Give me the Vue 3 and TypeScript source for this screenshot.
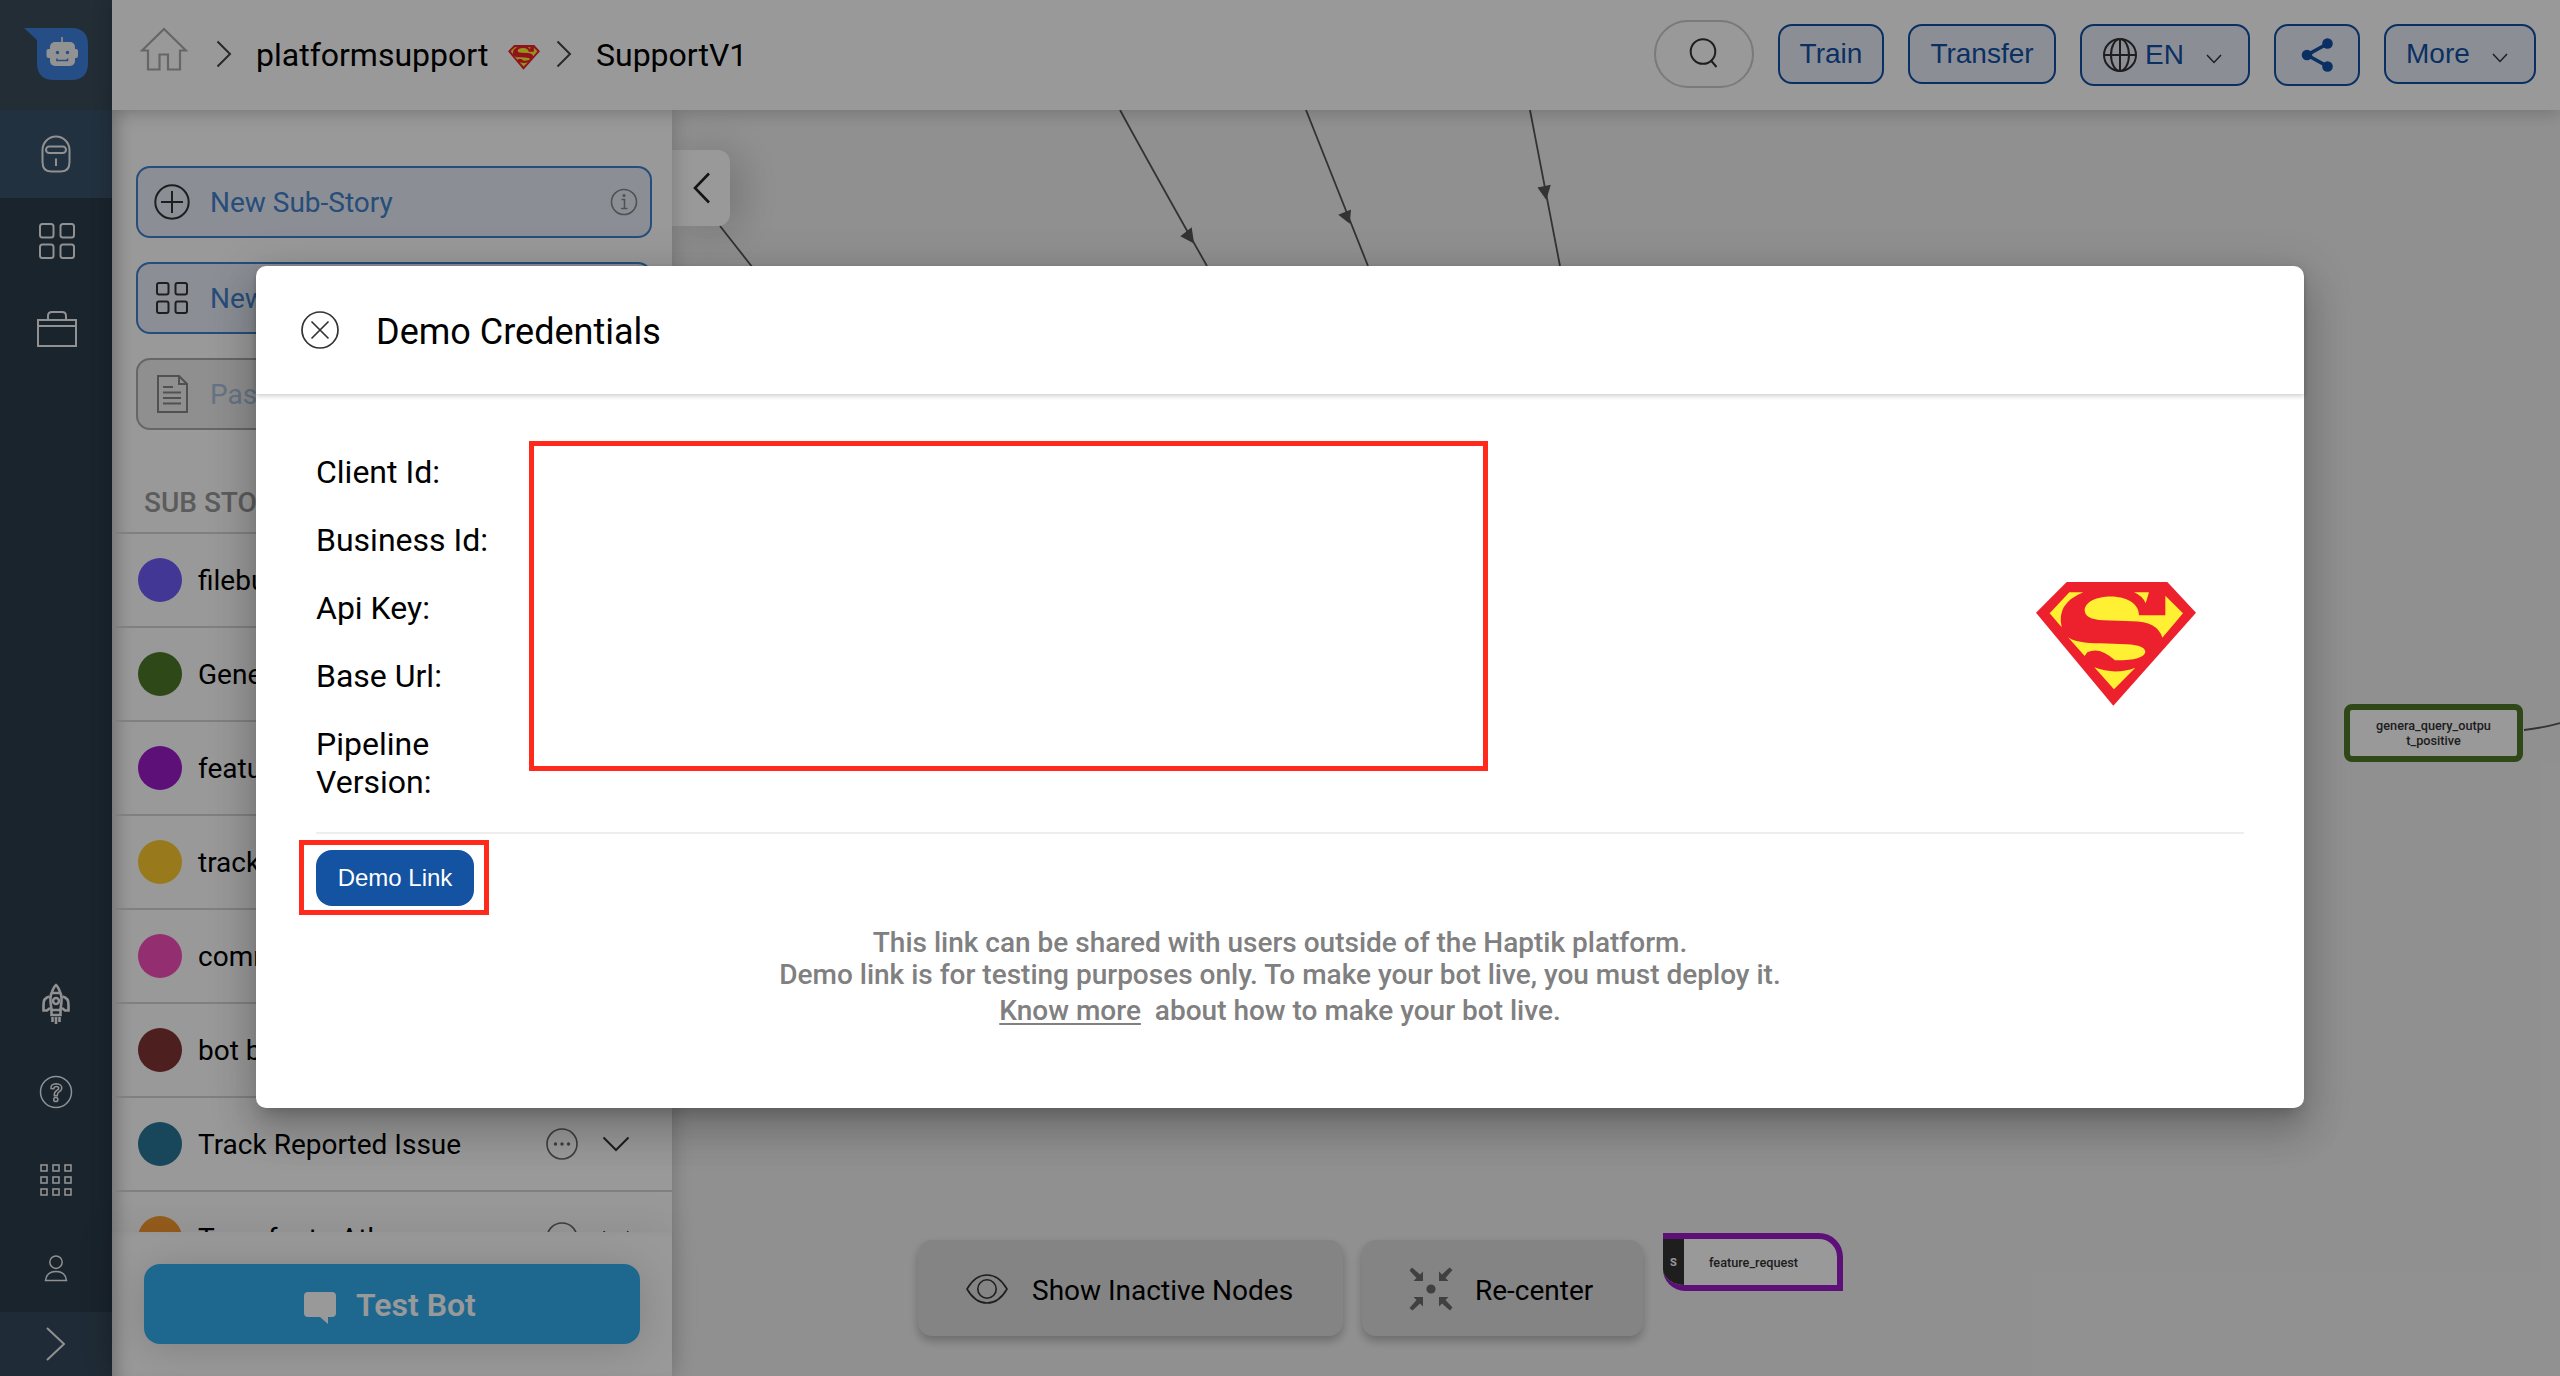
<script setup lang="ts">
interface Story {
  name: string
  color: string
}

const stories: Story[] = [
  { name: 'filebug', color: '#705dfa' },
  { name: 'General', color: '#4e7828' },
  { name: 'feature', color: '#9d1bca' },
  { name: 'tracking', color: '#fdca2d' },
  { name: 'common', color: '#f54dbc' },
  { name: 'bot builder', color: '#823435' },
  { name: 'Track Reported Issue', color: '#287596' },
  { name: 'Transfer to Athena', color: '#fa9b2f' },
]

const labels: string[] = ['Client Id:', 'Business Id:', 'Api Key:', 'Base Url:', 'Pipeline Version:']

const cells: number[] = [0, 12, 24]
</script>

<template>
  <div class="app">
    <nav class="rail">
      <div class="logo">
        <svg width="64" height="52" viewBox="0 0 64 52">
          <path d="M0 0H47Q64 0 64 17V35Q64 52 47 52H30Q13 52 13 35V12Z" fill="#3f82e2" />
          <rect x="37.2" y="9" width="1.6" height="7" fill="#f4f4f4" />
          <rect x="26" y="14" width="25" height="24" rx="5" fill="#f4f4f4" />
          <rect x="22.500" y="21" width="31.500" height="9" rx="2" fill="#f4f4f4" />
          <circle cx="33.500" cy="24.500" r="1.700" fill="#3f82e2" />
          <circle cx="43.500" cy="24.500" r="1.700" fill="#3f82e2" />
          <path d="M33 30.500V32.500H43.500V30.500" fill="none" stroke="#3f82e2" stroke-width="1.600" />
        </svg>
      </div>
      <div class="rail-item active">
        <svg width="30" height="38" viewBox="0 0 30 38" class="line">
          <path d="M1.500 15A13.500 13.500 0 0 1 28.500 15V27Q28.500 36.500 20 36.500H10Q1.500 36.500 1.500 27Z" />
          <rect x="5" y="11.500" width="20" height="6.500" rx="3.250" />
          <path d="M15 23.500V31" />
        </svg>
      </div>
      <div class="rail-item raised">
        <svg width="36" height="36" viewBox="0 0 36 36" class="line">
          <rect x="1" y="1" width="13.500" height="13.500" rx="2.500" />
          <rect x="21.500" y="1" width="13.500" height="13.500" rx="2.500" />
          <rect x="1" y="21.500" width="13.500" height="13.500" rx="2.500" />
          <rect x="21.500" y="21.500" width="13.500" height="13.500" rx="2.500" />
        </svg>
      </div>
      <div class="rail-item raised">
        <svg width="40" height="36" viewBox="0 0 40 36" class="line">
          <rect x="1" y="9" width="38" height="26" />
          <path d="M1 15H39M11 9V5Q11 1 15 1H25Q29 1 29 5V9" />
        </svg>
      </div>
      <div class="spacer"></div>
      <div class="rail-item">
        <svg width="30" height="42" viewBox="0 0 30 42" class="line rocket">
          <path d="M10.500 32V26Q8 14 11 9Q13 3.500 15 2Q17 3.500 19 9Q22 14 19.500 26V32Z" />
          <path d="M10.500 10H19.500M9.500 27H20.500" />
          <circle cx="15" cy="18" r="3" />
          <path d="M8.500 13.500Q2 15 2.500 22V27.500H6L9 25M21.500 13.500Q28 15 27.500 22V27.500H24L21 25" />
          <path d="M11.500 34V39M15 34V41M18.500 34V39" />
        </svg>
      </div>
      <div class="rail-item">
        <svg width="34" height="34" viewBox="0 0 34 34" class="line">
          <circle cx="17" cy="17" r="15.500" stroke-width="1.500" />
          <path
            d="M12 13.500Q11.500 9 17 8.800Q23 9 22.800 13.200Q22.600 15.500 19.500 17.300Q18.300 18 18.300 20.700H15.300Q15 17 17.500 15.600Q20 14.300 19.800 13Q19.500 11.500 17.200 11.600Q15 11.600 14.800 13.700Z"
            stroke-width="1.500"
          />
          <circle cx="16.800" cy="24.500" r="2.100" stroke-width="1.500" />
        </svg>
      </div>
      <div class="rail-item">
        <svg width="32" height="32" viewBox="0 0 32 32" class="line">
          <template v-for="y in cells" :key="y">
            <rect v-for="x in cells" :key="x" :x="x + 1" :y="y + 1" width="6" height="6" stroke-width="1.600" />
          </template>
        </svg>
      </div>
      <div class="rail-item">
        <svg width="24" height="27" viewBox="0 0 24 27" class="line">
          <circle cx="12" cy="7.200" r="6.200" stroke-width="1.500" />
          <path d="M1.500 25.500Q2.500 16.500 12 16.500Q21.500 16.500 22.500 25.500Z" stroke-width="1.500" />
        </svg>
      </div>
      <div class="rail-toggle">
        <svg width="20" height="34" viewBox="0 0 20 34" class="line"><path d="M1 1L18 17L1 33" /></svg>
      </div>
    </nav>

    <div class="main">
      <header class="topbar">
        <div class="crumbs">
          <svg class="home" width="48" height="44" viewBox="0 0 48 44">
            <path d="M24 2L2 23.500H8V42.500H19.500V27.500H28V42.500H40V23.500H46Z" />
          </svg>
          <svg class="sep" width="16" height="28" viewBox="0 0 16 28"><path d="M1.500 1.500L14 14L1.500 26.500" /></svg>
          <span class="crumb first">platformsupport</span>
          <svg class="badge" width="32" height="25" viewBox="108 66 480 372">
            <path d="M200 66H502L588 158L340 437L108 158Z" fill="#ed212d" />
            <path d="M208 97H250Q168 130 185 202L149 160ZM402 97H447L437 130Q428 108 402 97ZM496 107L549 160L487 233Q472 184 396 184L310 181Q254 178 254 151C256 95 418 91 417 166H496ZM204 232Q230 250 300 250L360 252Q436 252 436 276Q430 302 345 301Q298 258 262 277L254 288ZM283 322Q345 346 406 323L342 388Z" fill="#fff034" />
          </svg>
          <svg class="sep second" width="16" height="28" viewBox="0 0 16 28"><path d="M1.500 1.500L14 14L1.500 26.500" /></svg>
          <span class="crumb">SupportV1</span>
        </div>
        <div class="actions">
          <div class="search">
            <svg width="30" height="30" viewBox="0 0 30 30">
              <circle cx="14" cy="13.500" r="12.300" />
              <path d="M22 22.500L27.500 29" />
            </svg>
          </div>
          <button class="btn train">Train</button>
          <button class="btn transfer">Transfer</button>
          <button class="btn tall lang">
            <svg width="34" height="34" viewBox="0 0 34 34" class="globe">
              <circle cx="17" cy="17" r="16" />
              <ellipse cx="17" cy="17" rx="9" ry="16" />
              <path d="M17 1V33M1 17H33" />
            </svg>
            <span>EN</span>
            <svg class="drop" width="16" height="10" viewBox="0 0 16 10"><path d="M1 1L8 8.500L15 1" /></svg>
          </button>
          <button class="btn tall share">
            <svg width="34" height="34" viewBox="0 0 34 34">
              <path d="M27 6L7 17L27 28" fill="none" stroke="#1150a5" stroke-width="3.600" />
              <circle cx="27.500" cy="5.500" r="5.300" fill="#1150a5" />
              <circle cx="7" cy="17" r="5.300" fill="#1150a5" />
              <circle cx="27.500" cy="28.500" r="5.300" fill="#1150a5" />
            </svg>
          </button>
          <button class="btn more">
            <span>More</span>
            <svg class="drop" width="16" height="10" viewBox="0 0 16 10"><path d="M1 1L8 8.500L15 1" /></svg>
          </button>
        </div>
      </header>

      <div class="body">
        <aside class="panel">
          <div class="cards">
            <div class="card">
              <svg width="36" height="36" viewBox="0 0 36 36" class="dark">
                <circle cx="18" cy="18" r="16.700" />
                <path d="M18 7V29M7 18H29" />
              </svg>
              <span>New Sub-Story</span>
              <svg class="info" width="28" height="28" viewBox="0 0 28 28">
                <circle cx="14" cy="14" r="12.500" />
                <path d="M11.500 11.500H14.500V20.500M11 20.500H17.500" />
                <circle cx="14" cy="7.500" r="0.800" />
              </svg>
            </div>
            <div class="card">
              <svg width="36" height="36" viewBox="0 0 36 36" class="dark">
                <rect x="3" y="3" width="11.500" height="11.500" rx="2" />
                <rect x="21.500" y="3" width="11.500" height="11.500" rx="2" />
                <rect x="3" y="21.500" width="11.500" height="11.500" rx="2" />
                <rect x="21.500" y="21.500" width="11.500" height="11.500" rx="2" />
              </svg>
              <span>New Group</span>
            </div>
            <div class="card muted">
              <svg width="36" height="40" viewBox="0 0 36 40" class="dark">
                <path d="M4 2H25L33 10V38H4ZM25 2V10H33M9 13H19M9 18.500H27M9 24H27M9 29.500H27" />
              </svg>
              <span>Paste</span>
            </div>
          </div>
          <div class="list-title">SUB STORIES</div>
          <ul class="stories">
            <li v-for="story in stories" :key="story.name">
              <i class="dot" :style="{ background: story.color }"></i>
              <span class="story-name">{{ story.name }}</span>
              <svg class="ellipsis" width="34" height="34" viewBox="0 0 34 34">
                <circle cx="17" cy="17" r="15" fill="none" stroke="#666" stroke-width="1.600" />
                <circle cx="10.500" cy="17" r="1.700" />
                <circle cx="17" cy="17" r="1.700" />
                <circle cx="23.500" cy="17" r="1.700" />
              </svg>
              <svg class="expand" width="28" height="16" viewBox="0 0 28 16"><path d="M1.500 1.500L14 14L26.500 1.500" /></svg>
            </li>
          </ul>
          <div class="panel-foot">
            <button class="test">
              <svg width="32" height="32" viewBox="0 0 32 32">
                <path d="M4 0H28Q32 0 32 4V21Q32 25 28 25H24V32L16 25H4Q0 25 0 21V4Q0 0 4 0Z" fill="#fff" />
              </svg>
              <span>Test Bot</span>
            </button>
          </div>
        </aside>

        <section class="canvas">
          <svg class="edges" width="1888" height="1266" viewBox="672 110 1888 1266">
            <path d="M720 226L753 268M1120 110Q1156 176 1207 266M1306 110L1368 266M1530 110L1560 266M2524 730Q2542 728 2560 723" />
            <path class="head" d="M1193 242L1182 236L1191 229ZM1349 222L1340 215L1350 211ZM1546 198L1539 188L1549.500 186Z" />
          </svg>
          <div class="collapse">
            <svg width="18" height="32" viewBox="0 0 18 32"><path d="M16 1.500L2 16L16 30.500" /></svg>
          </div>
          <div class="tools">
            <div class="tool inactive">
              <svg width="42" height="30" viewBox="0 0 42 30" class="eye">
                <path d="M1 15Q9 1 21 1Q33 1 41 15Q33 29 21 29Q9 29 1 15Z" />
                <circle cx="21" cy="15" r="9.200" />
              </svg>
              <span>Show Inactive Nodes</span>
            </div>
            <div class="tool recenter">
              <svg width="44" height="44" viewBox="0 0 44 44">
                <circle cx="22" cy="22" r="4.600" />
                <g v-for="a in [0, 90, 180, 270]" :key="a" :transform="`rotate(${a} 22 22)`">
                  <path d="M3 0.500L11 7.500L14 4.500V14H4.500L7.500 11L0.500 3.500Z" />
                </g>
              </svg>
              <span>Re-center</span>
            </div>
          </div>
          <div class="node green">genera_query_outpu<br />t_positive</div>
          <div class="node start">
            <b>S</b>
            <span>feature_request</span>
          </div>
        </section>
      </div>
    </div>

    <div class="overlay">
      <div class="modal">
        <div class="modal-head">
          <svg width="38" height="38" viewBox="0 0 38 38">
            <circle cx="19" cy="19" r="18" />
            <path d="M10.500 10.500L27.500 27.500M27.500 10.500L10.500 27.500" />
          </svg>
          <h2>Demo Credentials</h2>
        </div>
        <div class="modal-body">
          <div class="creds">
            <div class="labels">
              <div v-for="label in labels" :key="label" class="label">{{ label }}</div>
            </div>
            <svg class="brand" width="160" height="124" viewBox="108 66 480 372">
              <path d="M200 66H502L588 158L340 437L108 158Z" fill="#ed212d" />
              <path d="M208 97H250Q168 130 185 202L149 160ZM402 97H447L437 130Q428 108 402 97ZM496 107L549 160L487 233Q472 184 396 184L310 181Q254 178 254 151C256 95 418 91 417 166H496ZM204 232Q230 250 300 250L360 252Q436 252 436 276Q430 302 345 301Q298 258 262 277L254 288ZM283 322Q345 346 406 323L342 388Z" fill="#fff034" />
            </svg>
          </div>
          <button class="demo">Demo Link</button>
          <div class="note">
            <p>This link can be shared with users outside of the Haptik platform.</p>
            <p>Demo link is for testing purposes only. To make your bot live, you must deploy it.</p>
            <p class="last"><a>Know more</a> about how to make your bot live.</p>
          </div>
        </div>
        <div class="mark values"></div>
        <div class="mark link"></div>
      </div>
    </div>
  </div>
</template>

<style>
body {
  margin: 0;
  overflow: hidden;
}
</style>

<style scoped>
* {
  box-sizing: border-box;
}
svg {
  display: block;
  flex: none;
}
button {
  margin: 0;
  padding: 0;
  border: 0;
}
.app {
  position: relative;
  display: flex;
  width: 2560px;
  height: 1376px;
  overflow: hidden;
  font-family: Roboto, 'Liberation Sans', sans-serif;
  color: #000;
}
.rail {
  display: flex;
  flex-direction: column;
  width: 112px;
  background: #2b3c4b;
}
.logo {
  height: 110px;
  padding: 28px 0 0 24px;
  background: #3a4b5a;
}
.rail-item {
  display: flex;
  align-items: center;
  justify-content: center;
  height: 88px;
}
.rail-item.active {
  background: #395269;
}
.rail-item.raised {
  padding: 0 0 2px 1px;
}
.spacer {
  flex: 1;
}
.rail-toggle {
  display: flex;
  align-items: center;
  justify-content: center;
  height: 64px;
  background: #34485a;
}
.line {
  fill: none;
  stroke: #f2f2f2;
  stroke-width: 2;
}
.rocket {
  stroke-width: 2.600;
}
.main {
  display: flex;
  flex: 1;
  flex-direction: column;
}
.topbar {
  position: relative;
  z-index: 2;
  display: flex;
  justify-content: space-between;
  height: 110px;
  padding-right: 24px;
  background: #fff;
  box-shadow: 0 2px 18px rgba(0, 0, 0, 0.22);
}
.crumbs {
  display: flex;
  align-items: center;
  padding-left: 28px;
}
.home {
  margin-top: -12px;
  fill: none;
  stroke: #aaa;
  stroke-width: 2.200;
}
.sep {
  margin-left: 28px;
  margin-top: -2px;
  fill: none;
  stroke: #444;
  stroke-width: 2;
}
.sep.second {
  margin-left: 16px;
}
.crumb {
  width: 152px;
  margin-left: 24px;
  font-size: 32px;
  white-space: nowrap;
}
.crumb.first {
  width: 234px;
}
.badge {
  margin: 5px 0 0 18px;
}
.actions {
  display: flex;
  align-items: flex-start;
  gap: 24px;
  padding-top: 24px;
}
.search {
  display: flex;
  align-items: center;
  justify-content: center;
  width: 100px;
  height: 68px;
  margin-top: -4px;
  border: 2px solid #ccc;
  border-radius: 34px;
}
.search svg {
  margin-top: -2px;
  fill: none;
  stroke: #333;
  stroke-width: 2;
}
.btn {
  display: flex;
  align-items: center;
  justify-content: center;
  height: 60px;
  border: 2px solid #1150a5;
  border-radius: 14px;
  background: #e8eef8;
  color: #1150a5;
  font-family: 'Liberation Sans', Arial, sans-serif;
  font-size: 28px;
}
.tall {
  height: 62px;
}
.train {
  width: 106px;
}
.transfer {
  width: 148px;
}
.lang {
  width: 170px;
  justify-content: flex-start;
  padding-left: 21px;
}
.lang span {
  margin: -1px 22px 0 8px;
}
.drop {
  margin-top: 8px;
  fill: none;
  stroke: #333;
  stroke-width: 1.500;
}
.globe {
  fill: none;
  stroke: #333;
  stroke-width: 2;
}
.share {
  width: 86px;
}
.more {
  width: 152px;
  justify-content: flex-start;
  padding-left: 20px;
}
.more span {
  margin-right: 22px;
}
.body {
  display: flex;
  flex: 1;
  min-height: 0;
}
.panel {
  position: relative;
  z-index: 1;
  display: flex;
  flex-direction: column;
  width: 560px;
  background: #fff;
  box-shadow:
    0 0 20px rgba(0, 0, 0, 0.22),
    inset 16px 0 18px -12px rgba(0, 0, 0, 0.28);
}
.cards {
  display: flex;
  flex-direction: column;
  gap: 24px;
  padding: 56px 20px 0 24px;
}
.card {
  display: flex;
  align-items: center;
  height: 72px;
  padding: 0 12px 0 16px;
  border: 2px solid #4180cc;
  border-radius: 14px;
  background: #e8eef8;
  color: #4180cc;
  font-size: 28px;
}
.card span {
  flex: 1;
  margin-left: 20px;
}
.dark {
  fill: none;
  stroke: #333;
  stroke-width: 2;
}
.info {
  fill: none;
  stroke: #888;
  stroke-width: 1.600;
}
.muted {
  border-color: #aaa;
  background: #eee;
  color: #a9c1e0;
}
.muted .dark {
  stroke: #888;
}
.list-title {
  height: 102px;
  padding: 56px 0 0 32px;
  color: #999;
  font-size: 28px;
  font-weight: 500;
}
.stories {
  flex: 1;
  min-height: 0;
  margin: 0;
  padding: 0;
  overflow: hidden;
  list-style: none;
}
.stories li {
  display: flex;
  align-items: center;
  height: 94px;
  padding: 0 42px 0 26px;
  border-top: 2px solid #d5d5d5;
  font-size: 28px;
}
.dot {
  width: 44px;
  height: 44px;
  border-radius: 50%;
}
.story-name {
  flex: 1;
  margin-left: 16px;
}
.ellipsis {
  margin-right: 23px;
  fill: #666;
}
.expand {
  fill: none;
  stroke: #333;
  stroke-width: 2;
}
.panel-foot {
  position: relative;
  height: 144px;
  padding: 32px 32px 0;
  background: #fff;
  box-shadow:
    0 -8px 40px rgba(0, 0, 0, 0.07),
    inset 16px 0 18px -12px rgba(0, 0, 0, 0.28);
}
.test {
  display: flex;
  align-items: center;
  justify-content: center;
  width: 496px;
  height: 80px;
  padding-right: 4px;
  border-radius: 16px;
  background: #32adf0;
  box-shadow: 0 4px 40px rgba(0, 0, 0, 0.16);
  color: #fff;
  font-family: Roboto, sans-serif;
  font-size: 32px;
  font-weight: 600;
}
.test svg {
  margin-top: 8px;
}
.test span {
  margin: 2px 0 0 20px;
}
.canvas {
  position: relative;
  flex: 1;
  background: #f1f1f1;
}
.edges {
  position: absolute;
  top: 0;
  left: 0;
  fill: none;
  stroke: #555;
  stroke-width: 1.800;
}
.head {
  fill: #555;
}
.collapse {
  position: absolute;
  top: 40px;
  left: 0;
  display: flex;
  align-items: center;
  width: 58px;
  height: 76px;
  padding-left: 21px;
  border-radius: 0 12px 12px 0;
  background: #fff;
  box-shadow: 10px 4px 44px rgba(0, 0, 0, 0.2);
}
.collapse svg {
  fill: none;
  stroke: #222;
  stroke-width: 2.600;
}
.tools {
  position: absolute;
  top: 1130px;
  left: 246px;
  display: flex;
  gap: 19px;
}
.tool {
  display: flex;
  align-items: center;
  width: 425px;
  height: 96px;
  padding-left: 48px;
  border-radius: 14px;
  background: #dcdcdc;
  box-shadow: 0 5px 10px rgba(0, 0, 0, 0.25);
  font-size: 28px;
}
.tool span {
  margin: 4px 0 0 24px;
}
.eye {
  margin-top: 2px;
  fill: none;
  stroke: #333;
  stroke-width: 1.600;
}
.recenter {
  width: 281px;
  padding-left: 47px;
  fill: #6c6c6c;
}
.recenter svg {
  margin-top: 2px;
}
.recenter span {
  margin-left: 22px;
}
.node {
  position: absolute;
  height: 58px;
  border: 6px solid #4e7828;
  border-radius: 8px;
  background: #fff;
  color: #333;
  font-size: 12.700px;
  font-weight: 500;
}
.green {
  top: 594px;
  left: 1672px;
  width: 179px;
  padding-top: 8px;
  line-height: 15px;
  text-align: center;
}
.start {
  top: 1123px;
  left: 991px;
  display: flex;
  align-items: center;
  width: 180px;
  overflow: hidden;
  border-color: #9d1bca;
  border-left: 0;
  border-radius: 0 24px 0 22px;
}
.start b {
  display: flex;
  align-items: center;
  justify-content: center;
  width: 21px;
  height: 58px;
  margin: -6px 0;
  background: #333;
  color: #fff;
  font-size: 11px;
  font-weight: 700;
}
.start span {
  flex: 1;
  padding-left: 25px;
}
.overlay {
  position: absolute;
  inset: 0;
  z-index: 10;
  display: flex;
  align-items: flex-start;
  justify-content: center;
  padding-top: 266px;
  background: rgba(0, 0, 0, 0.4);
}
.modal {
  position: relative;
  width: 2048px;
  height: 842px;
  border-radius: 10px;
  background: #fff;
  box-shadow:
    0 11px 15px -7px rgba(0, 0, 0, 0.2),
    0 24px 38px 3px rgba(0, 0, 0, 0.14),
    0 9px 46px 8px rgba(0, 0, 0, 0.12);
}
.modal-head {
  display: flex;
  align-items: center;
  height: 128px;
  padding-left: 45px;
  border-radius: 10px 10px 0 0;
  box-shadow: 0 2px 5px rgba(0, 0, 0, 0.2);
}
.modal-head svg {
  fill: none;
  stroke: #333;
  stroke-width: 1.700;
}
.modal-head h2 {
  margin: 4px 0 0 37px;
  font-size: 36px;
  font-weight: 400;
}
.modal-body {
  padding: 59px 60px 0;
}
.creds {
  display: flex;
  justify-content: space-between;
  height: 381px;
  border-bottom: 2px solid #eee;
}
.labels {
  display: flex;
  flex-direction: column;
  gap: 30px;
  width: 184px;
  font-size: 32px;
  line-height: 38px;
}
.brand {
  margin: 129px 48px 0 0;
}
.demo {
  display: block;
  width: 158px;
  height: 56px;
  margin-top: 16px;
  border-radius: 16px;
  background: #1452a2;
  color: #fff;
  font-family: 'Liberation Sans', Arial, sans-serif;
  font-size: 24px;
}
.note {
  margin-top: 21px;
  color: #808080;
  font-size: 28px;
  font-weight: 500;
  line-height: 32px;
  text-align: center;
}
.note p {
  margin: 0;
}
.note .last {
  margin-top: 4px;
}
.note a {
  margin-right: 7px;
  text-decoration: underline;
  text-decoration-thickness: 2px;
  text-underline-offset: 3px;
}
.mark {
  position: absolute;
  border: 5px solid #ff2a1c;
}
.values {
  top: 175px;
  left: 273px;
  width: 959px;
  height: 330px;
}
.link {
  top: 574px;
  left: 43px;
  width: 190px;
  height: 75px;
}
</style>
